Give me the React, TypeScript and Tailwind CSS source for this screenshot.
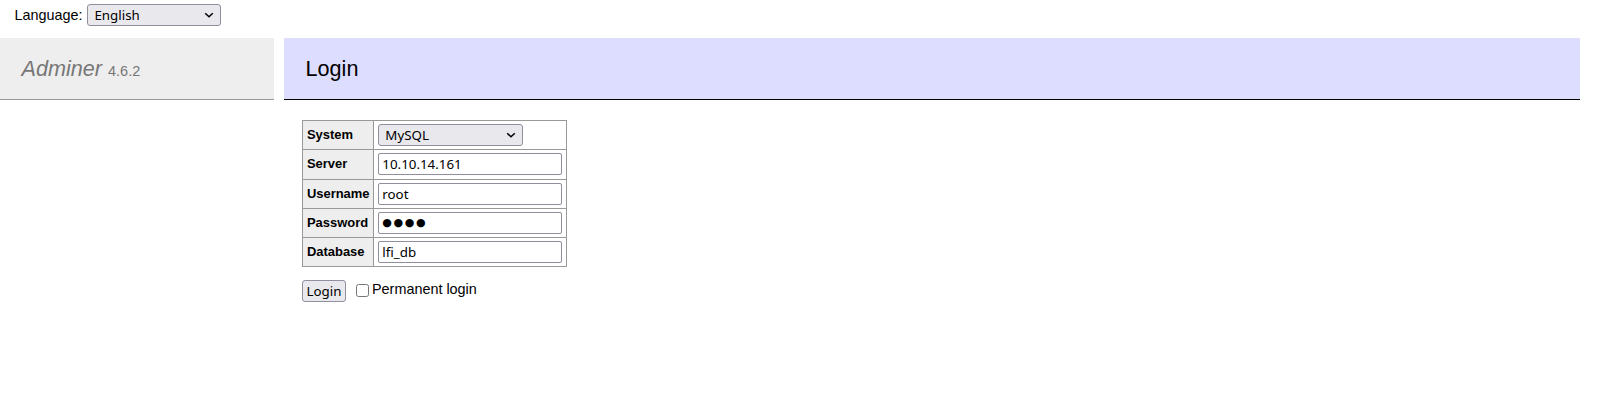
import React from 'react'

const Chevron = () => (
  <svg
    width="10"
    height="6"
    viewBox="0 0 10 6"
    className="pointer-events-none absolute right-[7px] top-1/2 -translate-y-1/2"
  >
    <path d="M1.2 1.2 L5 4.8 L8.8 1.2" fill="none" stroke="#000" strokeWidth="1.5" />
  </svg>
)

const Select = ({ value, width }: { value: string; width: string }) => (
  <span className="relative inline-block align-middle">
    <select
      defaultValue={value}
      className={`${width} h-[22px] appearance-none rounded-[3px] border border-[#8f8f9d] bg-[#e9e9ed] pl-[6px] text-[13.33px] leading-[20px] text-black font-['Noto_Sans',sans-serif]`}
    >
      <option>{value}</option>
    </select>
    <Chevron />
  </span>
)

const TextInput = ({ value, masked }: { value: string; masked?: boolean }) => (
  <input
    type="text"
    readOnly={masked}
    defaultValue={masked ? '●'.repeat(value.length) : value}
    className={`block h-[22px] w-[184px] rounded-[2px] border border-[#8f8f9d] bg-white px-[3px] text-black ${
      masked
        ? "text-[11px] tracking-[1.6px] font-['DejaVu_Sans',sans-serif]"
        : "text-[13.33px] font-['Noto_Sans',sans-serif]"
    }`}
  />
)

export default function App() {
  const rows = [
    { label: 'Server', value: '10.10.14.161' },
    { label: 'Username', value: 'root' },
    { label: 'Password', value: 'toor', masked: true },
    { label: 'Database', value: 'lfi_db' },
  ]

  return (
    <div className="min-h-[402px] bg-white text-black font-['Liberation_Sans',Arial,sans-serif] text-[14.4px] leading-[1.25]">
      {/* Language bar */}
      <div className="flex h-[38px] items-start gap-[5px] pl-[14.4px] pt-[4px]">
        <span className="leading-[22px]">Language:</span>
        <Select value="English" width="w-[134px]" />
      </div>

      <div className="flex">
        {/* Menu */}
        <div className="w-[274px] shrink-0">
          <h1 className="h-[62px] border-b border-[#999] bg-[#eee] pl-[21.6px] pt-[17.3px] text-[21.6px] leading-[27px] text-[#777]">
            <span className="italic">Adminer</span>{' '}
            <span className="text-[14.5px]">4.6.2</span>
          </h1>
        </div>

        {/* Content */}
        <div className="ml-[10px] mr-[20px] flex-1">
          <h2 className="h-[62px] border-b border-black bg-[#ddf] pl-[21.6px] pt-[17.3px] text-[21.6px] leading-[27px]">
            Login
          </h2>

          <form className="ml-[18px]">
            <table className="mt-[20px] border-collapse text-[12.96px]">
              <tbody>
                <tr>
                  <th className="border border-[#999] bg-[#eee] px-[3.9px] py-[3.15px] text-left font-bold">System</th>
                  <td className="border border-[#999] px-[3.9px] py-[3.15px]">
                    <Select value="MySQL" width="w-[145px]" />
                  </td>
                </tr>
                {rows.map((r) => (
                  <tr key={r.label}>
                    <th className="border border-[#999] bg-[#eee] px-[3.9px] py-[3.15px] text-left font-bold">{r.label}</th>
                    <td className="border border-[#999] px-[3.9px] py-[3.15px]">
                      <TextInput value={r.value} masked={r.masked} />
                    </td>
                  </tr>
                ))}
              </tbody>
            </table>

            <p className="mt-[12.5px] flex items-center">
              <button
                type="button"
                className="h-[22px] w-[44px] rounded-[3px] border border-[#8f8f9d] bg-[#e9e9ed] text-[13.33px] font-['Noto_Sans',sans-serif]"
              >
                Login
              </button>
              <label className="ml-[9.5px] flex items-center">
                <input type="checkbox" className="m-0 mr-[3.5px] size-[13px]" />
                <span className="-mt-[3px]">Permanent login</span>
              </label>
            </p>
          </form>
        </div>
      </div>
    </div>
  )
}
